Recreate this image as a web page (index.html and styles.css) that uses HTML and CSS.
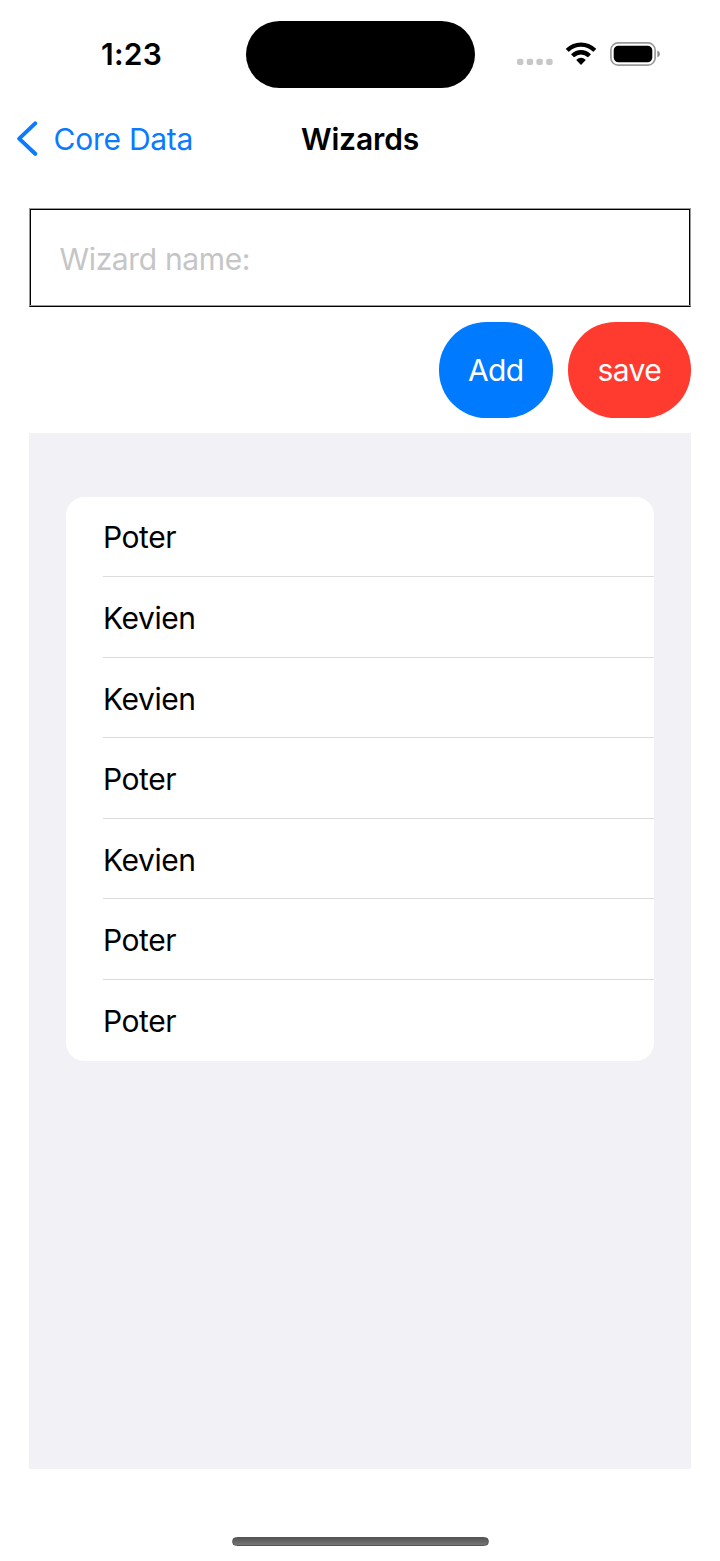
FILE: index.html
```html
<!DOCTYPE html>
<html lang="en">
<head>
<meta charset="utf-8">
<title>Wizards</title>
<link rel="stylesheet" href="styles.css">
</head>
<body>
<div class="screen">
  <header class="status-bar">
    <div class="time"><span>1:23</span></div>
    <div class="island"></div>
    <div class="indicators">
      <svg width="36" height="24" viewBox="0 0 36 24" fill="#c7c7c7"><rect x="0" y="16.7" width="6.4" height="6.4" rx="2"/><rect x="9.7" y="16.7" width="6.4" height="6.4" rx="2"/><rect x="19.4" y="16.7" width="6.4" height="6.4" rx="2"/><rect x="29.2" y="16.7" width="6.4" height="6.4" rx="2"/></svg>
      <svg class="wifi" width="32" height="24" viewBox="0 0 32 24"><path fill="#000" d="M1.1 6.5a21.4 21.4 0 0 1 29.8 0q.4.4 0 .8l-2.2 2.2q-.4.4-.8 0a17.2 17.2 0 0 0-23.8 0q-.4.4-.8 0l-2.2-2.2q-.4-.4 0-.8zM6.4 12a13.8 13.8 0 0 1 19.2 0q.4.4 0 .8l-2.3 2.3q-.4.3-.8 0a9.4 9.4 0 0 0-13 0q-.4.3-.8 0l-2.3-2.3q-.4-.4 0-.8zM11.7 17.5a6.4 6.4 0 0 1 8.6 0q.5.5 0 .9l-3.8 4q-.5.5-1 0l-3.8-4q-.5-.4 0-.9z"/></svg>
      <svg class="battery" width="52" height="24" viewBox="0 0 52 24"><rect x=".9" y=".9" width="44.2" height="22.2" rx="7.2" fill="none" stroke="#9b9b9b" stroke-width="1.7"/><rect x="3.7" y="3.7" width="38.6" height="16.6" rx="4.8"/><path d="M47.4 8.6q2.5 1 2.5 3.4t-2.5 3.4z" fill="#8a8a8a"/></svg>
    </div>
  </header>
  <nav class="nav-bar">
    <a class="back"><svg width="22" height="36" viewBox="0 0 22 36"><path d="M19.2 2.4 3.2 17.6 19.2 32.8" fill="none" stroke="#0a7aff" stroke-width="4" stroke-linecap="round" stroke-linejoin="round"/></svg><span class="back-label">Core Data</span></a>
    <h1 class="title">Wizards</h1>
  </nav>
  <main class="content">
    <div class="field"><span class="placeholder">Wizard name:</span></div>
    <div class="actions">
      <button class="btn add"><span>Add</span></button>
      <button class="btn save"><span>save</span></button>
    </div>
    <section class="panel">
      <ul class="list">
        <li class="row">Poter</li>
        <li class="row">Kevien</li>
        <li class="row">Kevien</li>
        <li class="row">Poter</li>
        <li class="row">Kevien</li>
        <li class="row">Poter</li>
        <li class="row">Poter</li>
      </ul>
    </section>
  </main>
  <footer class="home"><div class="home-bar"></div></footer>
</div>
</body>
</html>
```
FILE: styles.css
```css
* { box-sizing: border-box; }
body { margin: 0; background: #fff; }
.screen {
  width: 720px;
  height: 1561px;
  overflow: hidden;
  display: flex;
  flex-direction: column;
  font-family: Inter, "Liberation Sans", sans-serif;
  font-size: 30px;
  line-height: 36px;
  color: #000;
}
.status-bar {
  height: 107px;
  display: grid;
  grid-template-columns: 245.5px 229px 1fr;
  align-items: center;
}
.time { padding-left: 101px; font-weight: 560; letter-spacing: .3px; }
.island { height: 67px; margin-top: 1.5px; border-radius: 34px; background: #000; }
.indicators { display: flex; align-items: center; padding-left: 42px; }
.wifi { margin-left: 12px; }
.battery { margin-left: 13.5px; }
.nav-bar {
  height: 63px;
  display: grid;
  grid-template-columns: 245px 230px 245px;
  align-items: center;
}
.back { display: flex; align-items: center; padding-left: 16px; color: #0a7aff; }
.back-label { margin-left: 15.5px; letter-spacing: -.25px; }
.title { margin: 0; text-align: center; font-size: 30px; font-weight: 560; letter-spacing: -.15px; }
.content { padding: 38px 29.5px 0 29px; }
.field {
  height: 99px;
  border: 1px solid #999;
  border-bottom-color: #000;
  box-shadow: inset 0 -1px #999, inset 1px 1px #000, inset -1px 0 #000;
  padding: 2px 0 0 29.5px;
  display: flex;
  align-items: center;
  color: #c5c5c7;
  letter-spacing: -.35px;
}
.actions { display: flex; justify-content: flex-end; gap: 15px; padding: 15px 0; }
.btn {
  height: 95.5px;
  padding: 0;
  border: 0;
  border-radius: 47.5px;
  color: #fff;
  font: inherit;
  letter-spacing: -.6px;
  display: flex;
  align-items: center;
  justify-content: center;
}
.add { width: 114.5px; background: #007aff; }
.save { width: 122.5px; background: #ff3b30; }
.panel { height: 1036.5px; background: #f2f1f6; padding: 64px 36.5px 0 37px; }
.list {
  list-style: none;
  margin: 0;
  padding: 0 0 0 36.5px;
  border-radius: 18.5px;
  background: #fff;
}
.row { height: 80.6px; display: flex; align-items: center; padding: 1.2px 0 0 .5px; letter-spacing: -.45px; }
.row + .row { box-shadow: 0 -1px #dcdcdd; }
.home { padding: 68px 0 0 232px; }
.home-bar {
  width: 256.5px;
  height: 9px;
  border-radius: 5px;
  border: 1px solid #555;
  background: linear-gradient(#555, #777);
}
```
